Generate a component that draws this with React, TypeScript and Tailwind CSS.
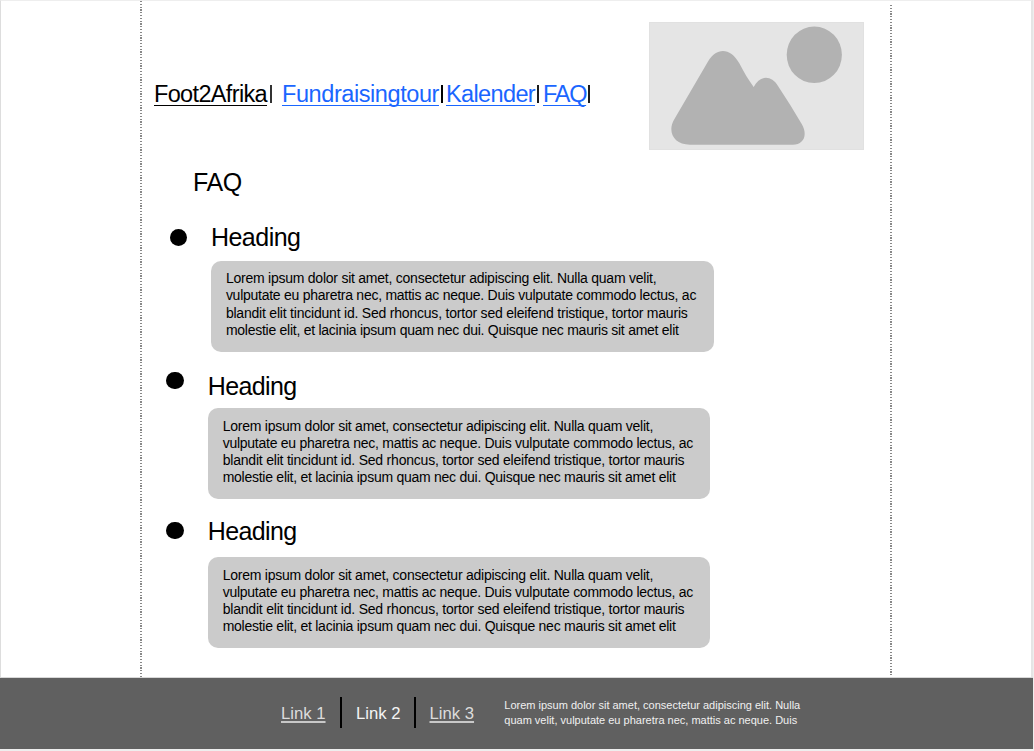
const bodyLines = [
  { text: "Lorem ipsum dolor sit amet, consectetur adipiscing elit. Nulla quam velit,", spacing: "tracking-[-0.24px]" },
  { text: "vulputate eu pharetra nec, mattis ac neque. Duis vulputate commodo lectus, ac", spacing: "tracking-[-0.26px]" },
  { text: "blandit elit tincidunt id. Sed rhoncus, tortor sed eleifend tristique, tortor mauris", spacing: "tracking-[-0.21px]" },
  { text: "molestie elit, et lacinia ipsum quam nec dui. Quisque nec mauris sit amet elit", spacing: "tracking-[-0.26px]" },
];

interface FaqItemProps {
  rowClass: string;
  dotClass: string;
  columnClass: string;
  headingClass: string;
  cardClass: string;
}

function FaqItem({ rowClass, dotClass, columnClass, headingClass, cardClass }: FaqItemProps) {
  return (
    <section className={`flex items-start ${rowClass}`}>
      <span className={`size-[17.4px] shrink-0 rounded-full bg-black ${dotClass}`} />
      <div className={`w-[502.5px] ${columnClass}`}>
        <h2 className={`h-7 text-[25px] leading-[26px] ${headingClass}`}>Heading</h2>
        <div className={`h-[91px] rounded-[10px] bg-[#cbcbcb] text-[14px] whitespace-nowrap ${cardClass}`}>
          {bodyLines.map((line) => (
            <p key={line.text} className={line.spacing}>
              {line.text}
            </p>
          ))}
        </div>
      </div>
    </section>
  );
}

function Guide({ className }: { className: string }) {
  return (
    <div
      className={`w-[2px] shrink-0 bg-[repeating-linear-gradient(to_bottom,#888_0px,#888_1.2px,#fff_1.2px,#fff_2.8px)] ${className}`}
    />
  );
}

function ImagePlaceholder() {
  return (
    <svg viewBox="0 0 215 128" className="mt-[21px] ml-auto h-32 w-[215px] bg-[#e5e5e5]">
      <rect x="0.5" y="0.5" width="214" height="127" fill="none" stroke="#e1e1e1" />
      <ellipse cx="165.3" cy="32.8" rx="27.6" ry="28.3" fill="#b2b2b2" />
      <path
        d="M59.3 39C67.5 25.3 81.5 25.3 90.3 41.3C95 50.5 99.5 58 104.7 65C111 53 122.3 53 129 64Q141 82 152.7 102C159 112.5 155 122.7 143.7 122.7H41C24.5 122.7 18 109.5 25.3 97.3Z"
        fill="#b2b2b2"
      />
    </svg>
  );
}

export default function App() {
  return (
    <div className="flex h-[751px] w-[1034px] flex-col overflow-hidden bg-[#eee] font-['Liberation_Sans',Arial,sans-serif] text-black">
      <div className="flex h-[677px] w-[1033px] border-t border-r-2 border-l border-t-[#eee] border-r-[#e5e5e5] border-l-[#ddd] bg-white">
        <Guide className="ml-[139px]" />
        <main className="w-[748px]">
          <header className="flex h-[149px] items-start pr-[26px]">
            <nav className="mt-20 flex h-[26px] items-start pl-3 text-[23.5px] leading-[26px] whitespace-nowrap">
              <a className="w-[113px] tracking-[-0.65px] underline decoration-[1.3px] underline-offset-[2.6px] [text-decoration-skip-ink:none]">Foot2Afrika</a>
              <span className="mt-1 ml-[3px] h-[18px] w-[2px] bg-[#333]" />
              <a className="ml-[10px] w-[157px] tracking-[-0.42px] text-[#1a66ff] underline decoration-[1.3px] underline-offset-[2.6px] [text-decoration-skip-ink:none]">Fundraisingtour</a>
              <span className="mt-1 ml-[2px] h-[18px] w-[2px] bg-black" />
              <a className="ml-[3px] w-[89px] tracking-[-0.63px] text-[#1a66ff] underline decoration-[1.3px] underline-offset-[2.6px] [text-decoration-skip-ink:none]">Kalender</a>
              <span className="mt-1 ml-[2px] h-[18px] w-[2px] bg-[#1c1c1c]" />
              <a className="ml-[4px] w-[43px] tracking-[-1.3px] text-[#1a66ff] underline decoration-[1.3px] underline-offset-[2.6px] [text-decoration-skip-ink:none]">FAQ</a>
              <span className="mt-1 ml-[2px] h-[18px] w-[2px] bg-[#1c1c1c]" />
            </nav>
            <ImagePlaceholder />
          </header>
          <h1 className="mt-[19px] h-7 pl-[51px] text-[25px] leading-[26px] tracking-[-0.4px]">FAQ</h1>
          <FaqItem
            rowClass="mt-[27px] pl-7"
            dotClass="mt-[4.6px]"
            columnClass="ml-[23.9px]"
            headingClass="-ml-[0.4px] tracking-[-0.5px]"
            cardClass="mt-[9px] pt-[9px] pl-[14.6px] leading-[17.3px]"
          />
          <FaqItem
            rowClass="mt-[21px] pl-[24.3px]"
            dotClass="mt-[-1px]"
            columnClass="ml-[24px]"
            headingClass="tracking-[-0.6px]"
            cardClass="mt-[7px] pt-[10px] pl-[15px] leading-[17px]"
          />
          <FaqItem
            rowClass="mt-[19px] pl-[24.3px]"
            dotClass="mt-[4px]"
            columnClass="ml-[24px]"
            headingClass="tracking-[-0.6px]"
            cardClass="mt-[11px] pt-[10px] pl-[15px] leading-[17px]"
          />
        </main>
        <Guide className="mt-1" />
      </div>
      <footer className="flex h-[72px] w-[1033px] items-start border-t border-[#d8d8d8] bg-[#606060] pl-[281px] text-white">
        <nav className="mt-[19px] flex h-[31px] items-start text-[16.7px] leading-5 whitespace-nowrap">
          <a className="mt-[7px] w-[45px] text-[#dcdcdc] underline decoration-[#c8c8c8] decoration-[1.5px] underline-offset-[2px]">Link 1</a>
          <span className="ml-[14px] h-[31px] w-[2px] bg-black" />
          <a className="mt-[7px] ml-[14px] w-[45px] text-[#f4f4f4]">Link 2</a>
          <span className="ml-[13px] h-[31px] w-[2px] bg-black" />
          <a className="mt-[7px] ml-[13.5px] w-[45px] text-[#dcdcdc] underline decoration-[#c8c8c8] decoration-[1.5px] underline-offset-[2px]">Link 3</a>
        </nav>
        <p className="mt-5 ml-[29.8px] text-[11px] leading-[15px] whitespace-nowrap text-[#f0f0f0]">
          Lorem ipsum dolor sit amet, consectetur adipiscing elit. Nulla
          <br />
          quam velit, vulputate eu pharetra nec, mattis ac neque. Duis
        </p>
      </footer>
    </div>
  );
}
